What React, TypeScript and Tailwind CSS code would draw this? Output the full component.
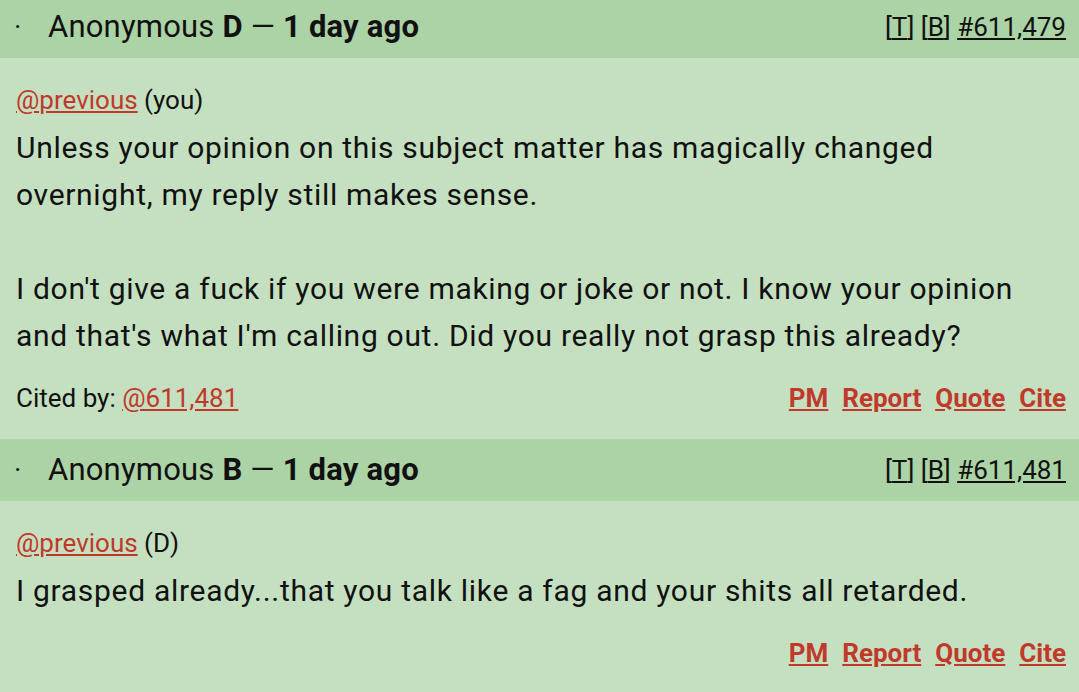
import React from "react";

interface Post {
  id: string;
  author: string;
  quoteTag: string;
  lines: string[];
  citedBy?: string;
}

const posts: Post[] = [
  {
    id: "#611,479",
    author: "D",
    quoteTag: "(you)",
    lines: [
      "Unless your opinion on this subject matter has magically changed overnight, my reply still makes sense.",
      "",
      "I don't give a fuck if you were making or joke or not. I know your opinion and that's what I'm calling out. Did you really not grasp this already?",
    ],
    citedBy: "@611,481",
  },
  {
    id: "#611,481",
    author: "B",
    quoteTag: "(D)",
    lines: ["I grasped already...that you talk like a fag and your shits all retarded."],
  },
];

function PostHeader({ post }: { post: Post }) {
  return (
    <div className="flex h-[62px] items-center bg-[#acd3a5] pl-[14px] pr-[13px]">
      <span className="w-[34px] text-[28px]">·</span>
      <span className="text-[31px] tracking-[0.2px]">
        Anonymous <b className="font-bold">{post.author}</b> — <b className="font-bold">1 day ago</b>
      </span>
      <span className="ml-auto text-[26px]">
        [<span className="underline">T</span>] [<span className="underline">B</span>]{" "}
        <span className="underline">{post.id}</span>
      </span>
    </div>
  );
}

function Actions() {
  return (
    <div className="flex gap-[14px] text-[26px] font-bold text-[#c0392b] underline">
      <span>PM</span>
      <span>Report</span>
      <span>Quote</span>
      <span>Cite</span>
    </div>
  );
}

function PostCard({ post }: { post: Post }) {
  return (
    <div>
      <PostHeader post={post} />
      <div className="bg-[#c5e0c0] pl-[16px] pr-[13px] pt-[18px] pb-[26px]">
        <div className="text-[26px] leading-[48px]">
          <span className="text-[#c0392b] underline">@previous</span> {post.quoteTag}
        </div>
        <div className="text-[30px] leading-[47px] tracking-[0.7px]">
          {post.lines.map((line, i) => (
            <p key={i}>{line || "\u00a0"}</p>
          ))}
        </div>
        <div className="mt-[24px] flex h-[30px] items-center">
          {post.citedBy && (
            <span className="text-[26px]">
              Cited by: <span className="text-[#c0392b] underline">{post.citedBy}</span>
            </span>
          )}
          <div className="ml-auto">
            <Actions />
          </div>
        </div>
      </div>
    </div>
  );
}

export default function App() {
  return (
    <div className="h-[692px] w-[1079px] overflow-hidden bg-[#c5e0c0] text-[#111] font-['Roboto',sans-serif]">
      <div className="-mt-[4px]">
        {posts.map((p) => (
          <PostCard key={p.id} post={p} />
        ))}
      </div>
    </div>
  );
}
